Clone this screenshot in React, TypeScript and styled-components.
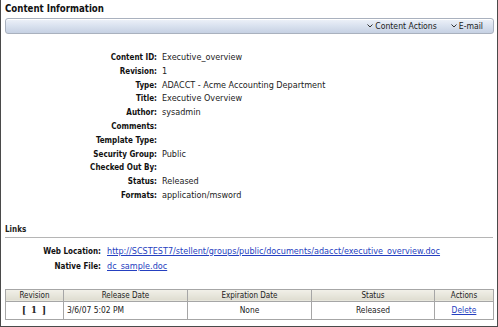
import React from "react"
import styled, { createGlobalStyle } from "styled-components"

const GlobalStyle = createGlobalStyle`
  html, body {
    margin: 0;
    padding: 0;
    background: #ffffff;
  }
  body {
    font-family: "DejaVu Sans Condensed", "Liberation Sans", sans-serif;
    color: #000;
  }
`

const Frame = styled.div`
  box-sizing: border-box;
  width: 498px;
  height: 327px;
  border: 1px solid #4a4a4a;
  border-top: none;
  overflow: hidden;
`

const Title = styled.div`
  padding: 2px 0 0 4px;
  font-size: 9.6px;
  font-weight: bold;
  line-height: 14px;
  color: #111;
`

const Toolbar = styled.div`
  display: flex;
  justify-content: flex-end;
  align-items: center;
  gap: 14px;
  box-sizing: border-box;
  height: 16px;
  margin: 2px 3px 0 4px;
  padding-right: 10px;
  border: 1px solid #a9b1be;
  border-radius: 3px;
  background: linear-gradient(#eef2f9 0%, #dbe3f0 45%, #c6d1e3 100%);
  box-shadow: inset 0 1px 0 #ffffff;
`

const ToolItem = styled.span`
  display: flex;
  align-items: center;
  gap: 2px;
  font-size: 8.6px;
  line-height: 12px;
  color: #1b1b1b;
`

const InfoGrid = styled.dl`
  display: grid;
  grid-template-columns: 156px 1fr;
  column-gap: 5px;
  margin: 17px 0 0 0;
  font-size: 9px;
  line-height: 13.8px;
`

const Label = styled.dt`
  margin: 0;
  text-align: right;
  font-size: 8px;
  font-weight: bold;
  white-space: nowrap;
  color: #111;
`

const Value = styled.dd`
  margin: 0;
  color: #222;
  white-space: nowrap;
`

const SectionHead = styled.div`
  margin: 21px 4px 0 4px;
  padding-bottom: 1px;
  border-bottom: 1px solid #b5b5b5;
  font-size: 8px;
  font-weight: bold;
  line-height: 12px;
  color: #222;
`

const LinkGrid = styled.dl`
  display: grid;
  grid-template-columns: 100px 1fr;
  column-gap: 6px;
  margin: 6px 0 0 0;
  font-size: 9px;
  line-height: 15px;
`

const DocLink = styled.a`
  color: #2540c0;
  text-decoration: underline;
  white-space: nowrap;
`

const Table = styled.table`
  width: 488px;
  margin: 15px 0 0 4px;
  border-collapse: collapse;
  table-layout: fixed;
  font-size: 8.4px;
  border: 1px solid #8f8f8f;
`

const Th = styled.th`
  height: 11px;
  padding: 0;
  font-size: 8px;
  font-weight: normal;
  color: #222;
  border: 1px solid #a6a6a6;
  background: linear-gradient(#f2f1e9, #dedcd0);
  text-align: center;
  line-height: 11px;
`

const Td = styled.td<{ $align?: "left" | "center" }>`
  height: 17px;
  padding: 0 3px;
  border: 1px solid #a6a6a6;
  text-align: ${(p) => p.$align ?? "center"};
  color: #222;
  background: #fff;
`

const RevNum = styled.span`
  font-family: "DejaVu Serif", serif;
  font-weight: bold;
  font-size: 8.5px;
  letter-spacing: 1px;
`

const Chevron = () => (
  <svg width="6" height="4" viewBox="0 0 6 4">
    <path d="M0.5 0.5 L3 3 L5.5 0.5" fill="none" stroke="#333" strokeWidth="1" />
  </svg>
)

const fields: [string, string][] = [
  ["Content ID:", "Executive_overview"],
  ["Revision:", "1"],
  ["Type:", "ADACCT - Acme Accounting Department"],
  ["Title:", "Executive Overview"],
  ["Author:", "sysadmin"],
  ["Comments:", ""],
  ["Template Type:", ""],
  ["Security Group:", "Public"],
  ["Checked Out By:", ""],
  ["Status:", "Released"],
  ["Formats:", "application/msword"],
]

export default function App() {
  return (
    <>
      <GlobalStyle />
      <Frame>
        <Title>Content Information</Title>
        <Toolbar>
          <ToolItem>
            <Chevron />
            Content Actions
          </ToolItem>
          <ToolItem>
            <Chevron />
            E-mail
          </ToolItem>
        </Toolbar>

        <InfoGrid>
          {fields.map(([label, value]) => (
            <React.Fragment key={label}>
              <Label>{label}</Label>
              <Value>{value}</Value>
            </React.Fragment>
          ))}
        </InfoGrid>

        <SectionHead>Links</SectionHead>
        <LinkGrid>
          <Label>Web Location:</Label>
          <Value>
            <DocLink href="#">
              http://SCSTEST7/stellent/groups/public/documents/adacct/executive_overview.doc
            </DocLink>
          </Value>
          <Label>Native File:</Label>
          <Value>
            <DocLink href="#">dc_sample.doc</DocLink>
          </Value>
        </LinkGrid>

        <Table>
          <colgroup>
            <col style={{ width: 58 }} />
            <col style={{ width: 124 }} />
            <col style={{ width: 124 }} />
            <col style={{ width: 123 }} />
            <col style={{ width: 59 }} />
          </colgroup>
          <thead>
            <tr>
              <Th>Revision</Th>
              <Th>Release Date</Th>
              <Th>Expiration Date</Th>
              <Th>Status</Th>
              <Th>Actions</Th>
            </tr>
          </thead>
          <tbody>
            <tr>
              <Td>
                <RevNum>[ 1 ]</RevNum>
              </Td>
              <Td $align="left">3/6/07 5:02 PM</Td>
              <Td>None</Td>
              <Td>Released</Td>
              <Td>
                <DocLink href="#">Delete</DocLink>
              </Td>
            </tr>
          </tbody>
        </Table>
      </Frame>
    </>
  )
}
